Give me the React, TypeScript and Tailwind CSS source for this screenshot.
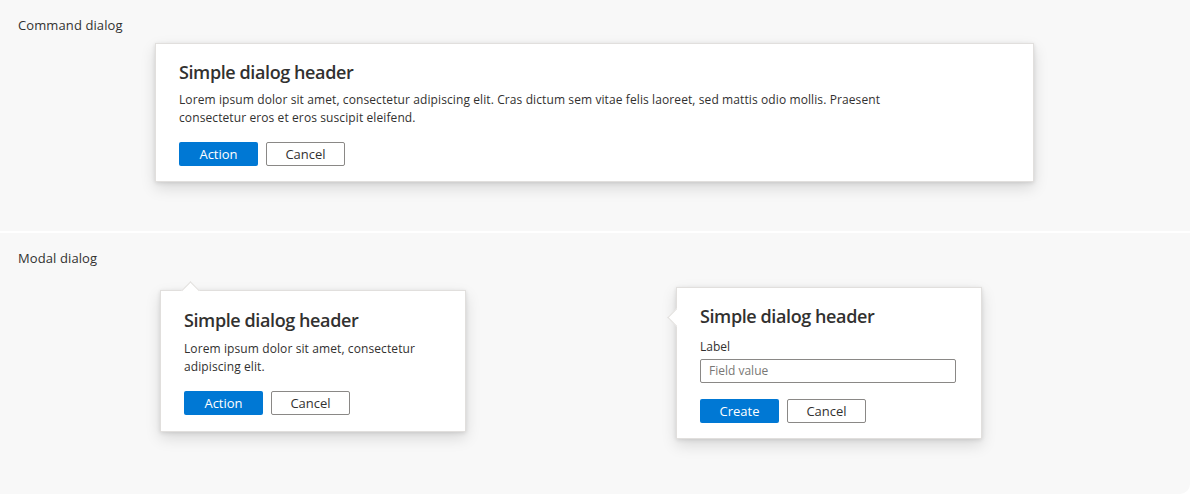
import React from "react";

const font = { fontFamily: '"Segoe UI", "Open Sans", sans-serif' };

function Btn({ primary, children }: { primary?: boolean; children: React.ReactNode }) {
  return primary ? (
    <button className="h-6 w-[79px] rounded-[2px] bg-[#0078d4] text-[13px] leading-none text-white">
      {children}
    </button>
  ) : (
    <button className="h-6 w-[79px] rounded-[2px] border border-[#8a8886] bg-white text-[13px] leading-none text-[#323130]">
      {children}
    </button>
  );
}

const cardCls =
  "relative bg-white border border-[#e1dfdd] shadow-[0_6px_14px_rgba(0,0,0,0.13),0_1px_4px_rgba(0,0,0,0.11)]";

export default function App() {
  return (
    <div className="h-[494px] w-[1190px] bg-white text-[#323130]" style={font}>
      <div className="flex h-full flex-col gap-[2px]">
        <section className="h-[231px] shrink-0 bg-[#f8f8f8] px-[18px] pt-[16px]">
          <div className="text-[13px] leading-[18px] tracking-[0.1px]">Command dialog</div>
          <div className={`${cardCls} ml-[137px] mt-[9px] h-[139px] w-[879px] px-[23px] pt-[16px]`}>
            <h2 className="text-[18px] font-semibold leading-[24px] tracking-[-0.4px]">Simple dialog header</h2>
            <p className="mt-[7px] w-[720px] text-[12px] leading-[18px] tracking-[0.1px]">
              Lorem ipsum dolor sit amet, consectetur adipiscing elit. Cras dictum sem vitae felis laoreet, sed
              mattis odio mollis. Praesent consectetur eros et eros suscipit eleifend.
            </p>
            <div className="mt-[15px] flex gap-2">
              <Btn primary>Action</Btn>
              <Btn>Cancel</Btn>
            </div>
          </div>
        </section>
        <section className="flex-1 rounded-br-[10px] bg-[#f8f8f8] px-[18px] pt-[16px]">
          <div className="text-[13px] leading-[18px] tracking-[0.1px]">Modal dialog</div>
          <div className="flex items-start">
            <div className={`${cardCls} ml-[142px] mt-[23px] h-[142px] w-[306px] px-[23px] pt-[17px]`}>
              <div className="absolute left-[23px] top-[-7px] h-[13px] w-[13px] rotate-45 border-l border-t border-[#e1dfdd] bg-white" />
              <h2 className="relative text-[18px] font-semibold leading-[24px] tracking-[-0.4px]">Simple dialog header</h2>
              <p className="relative mt-[8px] w-[250px] text-[12px] leading-[18px] tracking-[0.1px]">
                Lorem ipsum dolor sit amet, consectetur adipiscing elit.
              </p>
              <div className="relative mt-[15px] flex gap-2">
                <Btn primary>Action</Btn>
                <Btn>Cancel</Btn>
              </div>
            </div>
            <div className={`${cardCls} ml-[210px] mt-[20px] h-[152px] w-[306px] px-[23px] pt-[16px]`}>
              <div className="absolute left-[-7px] top-[23px] h-[13px] w-[13px] rotate-45 border-b border-l border-[#e1dfdd] bg-white" />
              <h2 className="relative text-[18px] font-semibold leading-[24px] tracking-[-0.4px]">Simple dialog header</h2>
              <div className="relative mt-[11px] text-[12px] leading-[16px]">Label</div>
              <div className="relative mt-[4px] flex h-6 w-[256px] items-center rounded-[2px] border border-[#8a8886] bg-white px-2 text-[12px] text-[#797775]">
                Field value
              </div>
              <div className="relative mt-[16px] flex gap-2">
                <Btn primary>Create</Btn>
                <Btn>Cancel</Btn>
              </div>
            </div>
          </div>
        </section>
      </div>
    </div>
  );
}
